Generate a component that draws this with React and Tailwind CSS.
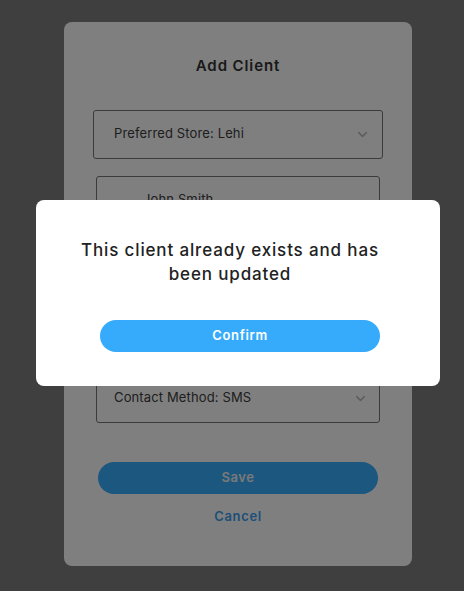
import React from "react";

function Chevron() {
  return (
    <svg width="15" height="15" viewBox="0 0 24 24" fill="none" stroke="#bdbdbd" strokeWidth="2.6" strokeLinecap="round" strokeLinejoin="round">
      <path d="M6 9l6 6 6-6" />
    </svg>
  );
}

function Field({ children, chevron, wide }) {
  return (
    <div
      className={`flex items-center justify-between h-[49px] border border-[#777] rounded-[3px] ${
        wide ? "mx-[29px] pl-[20px] pr-[12px]" : "mx-[32px] pl-[17px] pr-[11px]"
      }`}
    >
      <span className="text-[13px] text-[#3c3c3c] tracking-[0.01em] -mt-[2px]">{children}</span>
      {chevron && <Chevron />}
    </div>
  );
}

export default function App() {
  return (
    <div
      className="relative w-[464px] h-[591px] bg-[#7f7f7f] overflow-hidden"
      style={{ fontFamily: "Inter, 'Open Sans', sans-serif" }}
    >
      <div className="pt-[22px] pl-[64px]">
        <div className="w-[348px] h-[544px] bg-white rounded-[8px] flex flex-col">
          <h2 className="text-center text-[15px] font-semibold text-[#333] mt-[34px] leading-[20px] tracking-[0.06em]">Add Client</h2>
          <div className="mt-[34px] flex flex-col gap-[17px]">
            <Field wide chevron>Preferred Store: Lehi</Field>
            <Field>
              <span className="pl-[29px]">John Smith</span>
            </Field>
            <Field>Phone</Field>
            <Field>Email</Field>
            <Field chevron>Contact Method: SMS</Field>
          </div>
          <div className="mx-[34px] mt-[39px] h-[32px] rounded-full bg-[#37aefe] flex items-center justify-center">
            <span className="text-[13px] font-semibold text-[#f2f2f2] tracking-[0.04em]">Save</span>
          </div>
          <div className="mt-[13px] text-center text-[13px] font-semibold text-[#3a9ff0] tracking-[0.05em]">Cancel</div>
        </div>
      </div>

      <div className="absolute inset-0 bg-black/50" />

      <div className="absolute left-[36px] top-[200px] w-[404px] h-[186px] bg-white rounded-[8px] flex flex-col items-center">
        <p className="mt-[38px] mr-[16px] w-[310px] text-center text-[17px] leading-[24px] font-medium text-[#222] tracking-[0.05em]">
          This client already exists and has been updated
        </p>
        <div className="mt-[34px] ml-[4px] w-[280px] h-[32px] rounded-full bg-[#36abfc] flex items-center justify-center">
          <span className="text-[13px] font-semibold text-white tracking-[0.05em]">Confirm</span>
        </div>
      </div>
    </div>
  );
}
